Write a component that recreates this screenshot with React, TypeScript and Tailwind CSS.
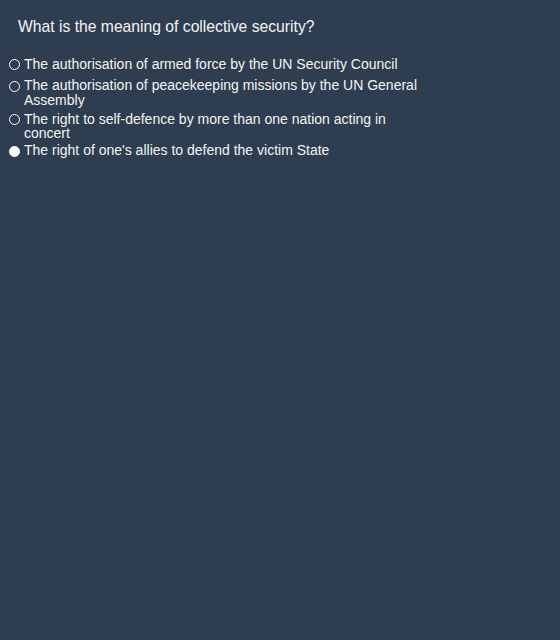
import React from "react";

export default function App() {
  const circle = "mr-[4px] ml-[9px] block h-[11px] w-[11px] shrink-0 rounded-full border border-white";
  return (
    <div
      className="h-[640px] w-[560px] bg-[#2e3d4f] text-[#f4f4f4]"
      style={{ fontFamily: '"Liberation Sans", Arial, sans-serif' }}
    >
      <div className="pt-[16px] pl-[18px] text-[15.7px] leading-[22px]">
        What is the meaning of collective security?
      </div>
      <div className="w-[430px] text-[14px]">
        <div className="mt-[18px] flex items-start leading-[16px]">
          <span className={"mt-[3px] " + circle} />
          <span>The authorisation of armed force by the UN Security Council</span>
        </div>
        <div className="mt-[6px] flex items-start leading-[15px]">
          <span className={"mt-[3px] " + circle} />
          <span>The authorisation of peacekeeping missions by the UN General Assembly</span>
        </div>
        <div className="mt-[4px] flex items-start leading-[14px]">
          <span className={"mt-[2px] " + circle} />
          <span>The right to self-defence by more than one nation acting in concert</span>
        </div>
        <div className="mt-[2px] flex items-start leading-[16px]">
          <span className={"mt-[4px] bg-white " + circle} />
          <span>The right of one's allies to defend the victim State</span>
        </div>
      </div>
    </div>
  );
}
